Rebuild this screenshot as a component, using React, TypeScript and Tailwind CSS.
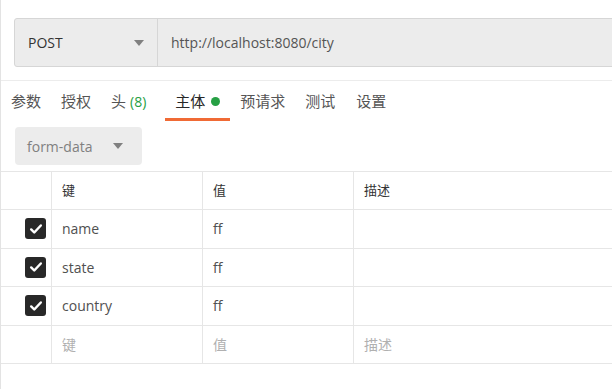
import React from "react";

const rows = [
  { key: "name", value: "ff" },
  { key: "state", value: "ff" },
  { key: "country", value: "ff" },
];

const tabs = ["参数", "授权"];

const Check = () => (
  <div className="w-[21px] h-[21px] rounded-[3px] bg-[#282828] flex items-center justify-center">
    <svg width="14" height="14" viewBox="0 0 16 16" fill="none">
      <path d="M2.5 8.5l3.5 3.5 7.5-8" stroke="white" strokeWidth="2.8" strokeLinecap="round" strokeLinejoin="round" />
    </svg>
  </div>
);

const Caret = () => (
  <svg width="10" height="6" viewBox="0 0 10 6">
    <path d="M0 0h10L5 6z" fill="#808080" />
  </svg>
);

export default function App() {
  return (
    <div
      className="w-[612px] h-[389px] overflow-hidden bg-white border-l border-[#e3e3e3]"
      style={{ fontFamily: '"Open Sans", "Noto Sans CJK SC", sans-serif' }}
    >
      {/* URL bar */}
      <div className="pt-[18px] pl-[13px] flex">
        <div className="flex-1 -mr-4 h-[49px] flex bg-[#ececec] border border-[#d6d6d6] rounded-[3px]">
          <div className="w-[143px] flex items-center justify-between pl-[13px] pr-[13px] border-r border-[#d6d6d6]">
            <span className="text-[14px] text-[#333]">POST</span>
            <Caret />
          </div>
          <div className="flex items-center pl-[13px] text-[14px] text-[#555]">
            http://localhost:8080/city
          </div>
        </div>
      </div>

      {/* tabs */}
      <div className="mt-[13px] border-t border-[#ececec] h-[41px] flex items-stretch pl-[10px] text-[15px] text-[#555]">
        {tabs.map((t) => (
          <div key={t} className="flex items-center mr-[20px]">{t}</div>
        ))}
        <div className="flex items-center mr-[19px]">
          头 <span className="ml-[4px] text-[14px] text-[#26a044]">(8)</span>
        </div>
        <div className="relative flex items-center px-[10px] mr-[10px] text-[#282828]">
          主体
          <span className="ml-[6px] w-[9px] h-[9px] rounded-full bg-[#26a044]" />
          <span className="absolute left-0 right-0 bottom-0 h-[3px] bg-[#f06a35]" />
        </div>
        <div className="flex items-center mr-[20px]">预请求</div>
        <div className="flex items-center mr-[21px]">测试</div>
        <div className="flex items-center">设置</div>
      </div>

      {/* body type */}
      <div className="pl-[14px] pt-[6px]">
        <div className="w-[127px] h-[38px] rounded-[4px] bg-[#ececec] flex items-center justify-between pl-[12px] pr-[19px] text-[14px] text-[#808080]">
          form-data
          <Caret />
        </div>
      </div>

      {/* table */}
      <div className="mt-[6px] border-t border-[#e6e6e6] text-[14px]">
        <div className="grid grid-cols-[51px_151px_151px_1fr] h-[38px] border-b border-[#e6e6e6] text-[13px] text-[#333]">
          <div className="border-r border-[#e6e6e6]" />
          <div className="border-r border-[#e6e6e6] flex items-center pl-[10px]">键</div>
          <div className="border-r border-[#e6e6e6] flex items-center pl-[10px]">值</div>
          <div className="flex items-center pl-[10px]">描述</div>
        </div>
        {rows.map((r) => (
          <div key={r.key} className="grid grid-cols-[51px_151px_151px_1fr] h-[38.5px] border-b border-[#e6e6e6] text-[#505050]">
            <div className="border-r border-[#e6e6e6] flex items-center justify-end pr-[5px]">
              <Check />
            </div>
            <div className="border-r border-[#e6e6e6] flex items-center pl-[10px]">{r.key}</div>
            <div className="border-r border-[#e6e6e6] flex items-center pl-[10px]">{r.value}</div>
            <div />
          </div>
        ))}
        <div className="grid grid-cols-[51px_151px_151px_1fr] h-[38px] border-b border-[#e6e6e6] text-[#b0b0b0]">
          <div className="border-r border-[#e6e6e6]" />
          <div className="border-r border-[#e6e6e6] flex items-center pl-[10px]">键</div>
          <div className="border-r border-[#e6e6e6] flex items-center pl-[10px]">值</div>
          <div className="flex items-center pl-[10px]">描述</div>
        </div>
      </div>
    </div>
  );
}
